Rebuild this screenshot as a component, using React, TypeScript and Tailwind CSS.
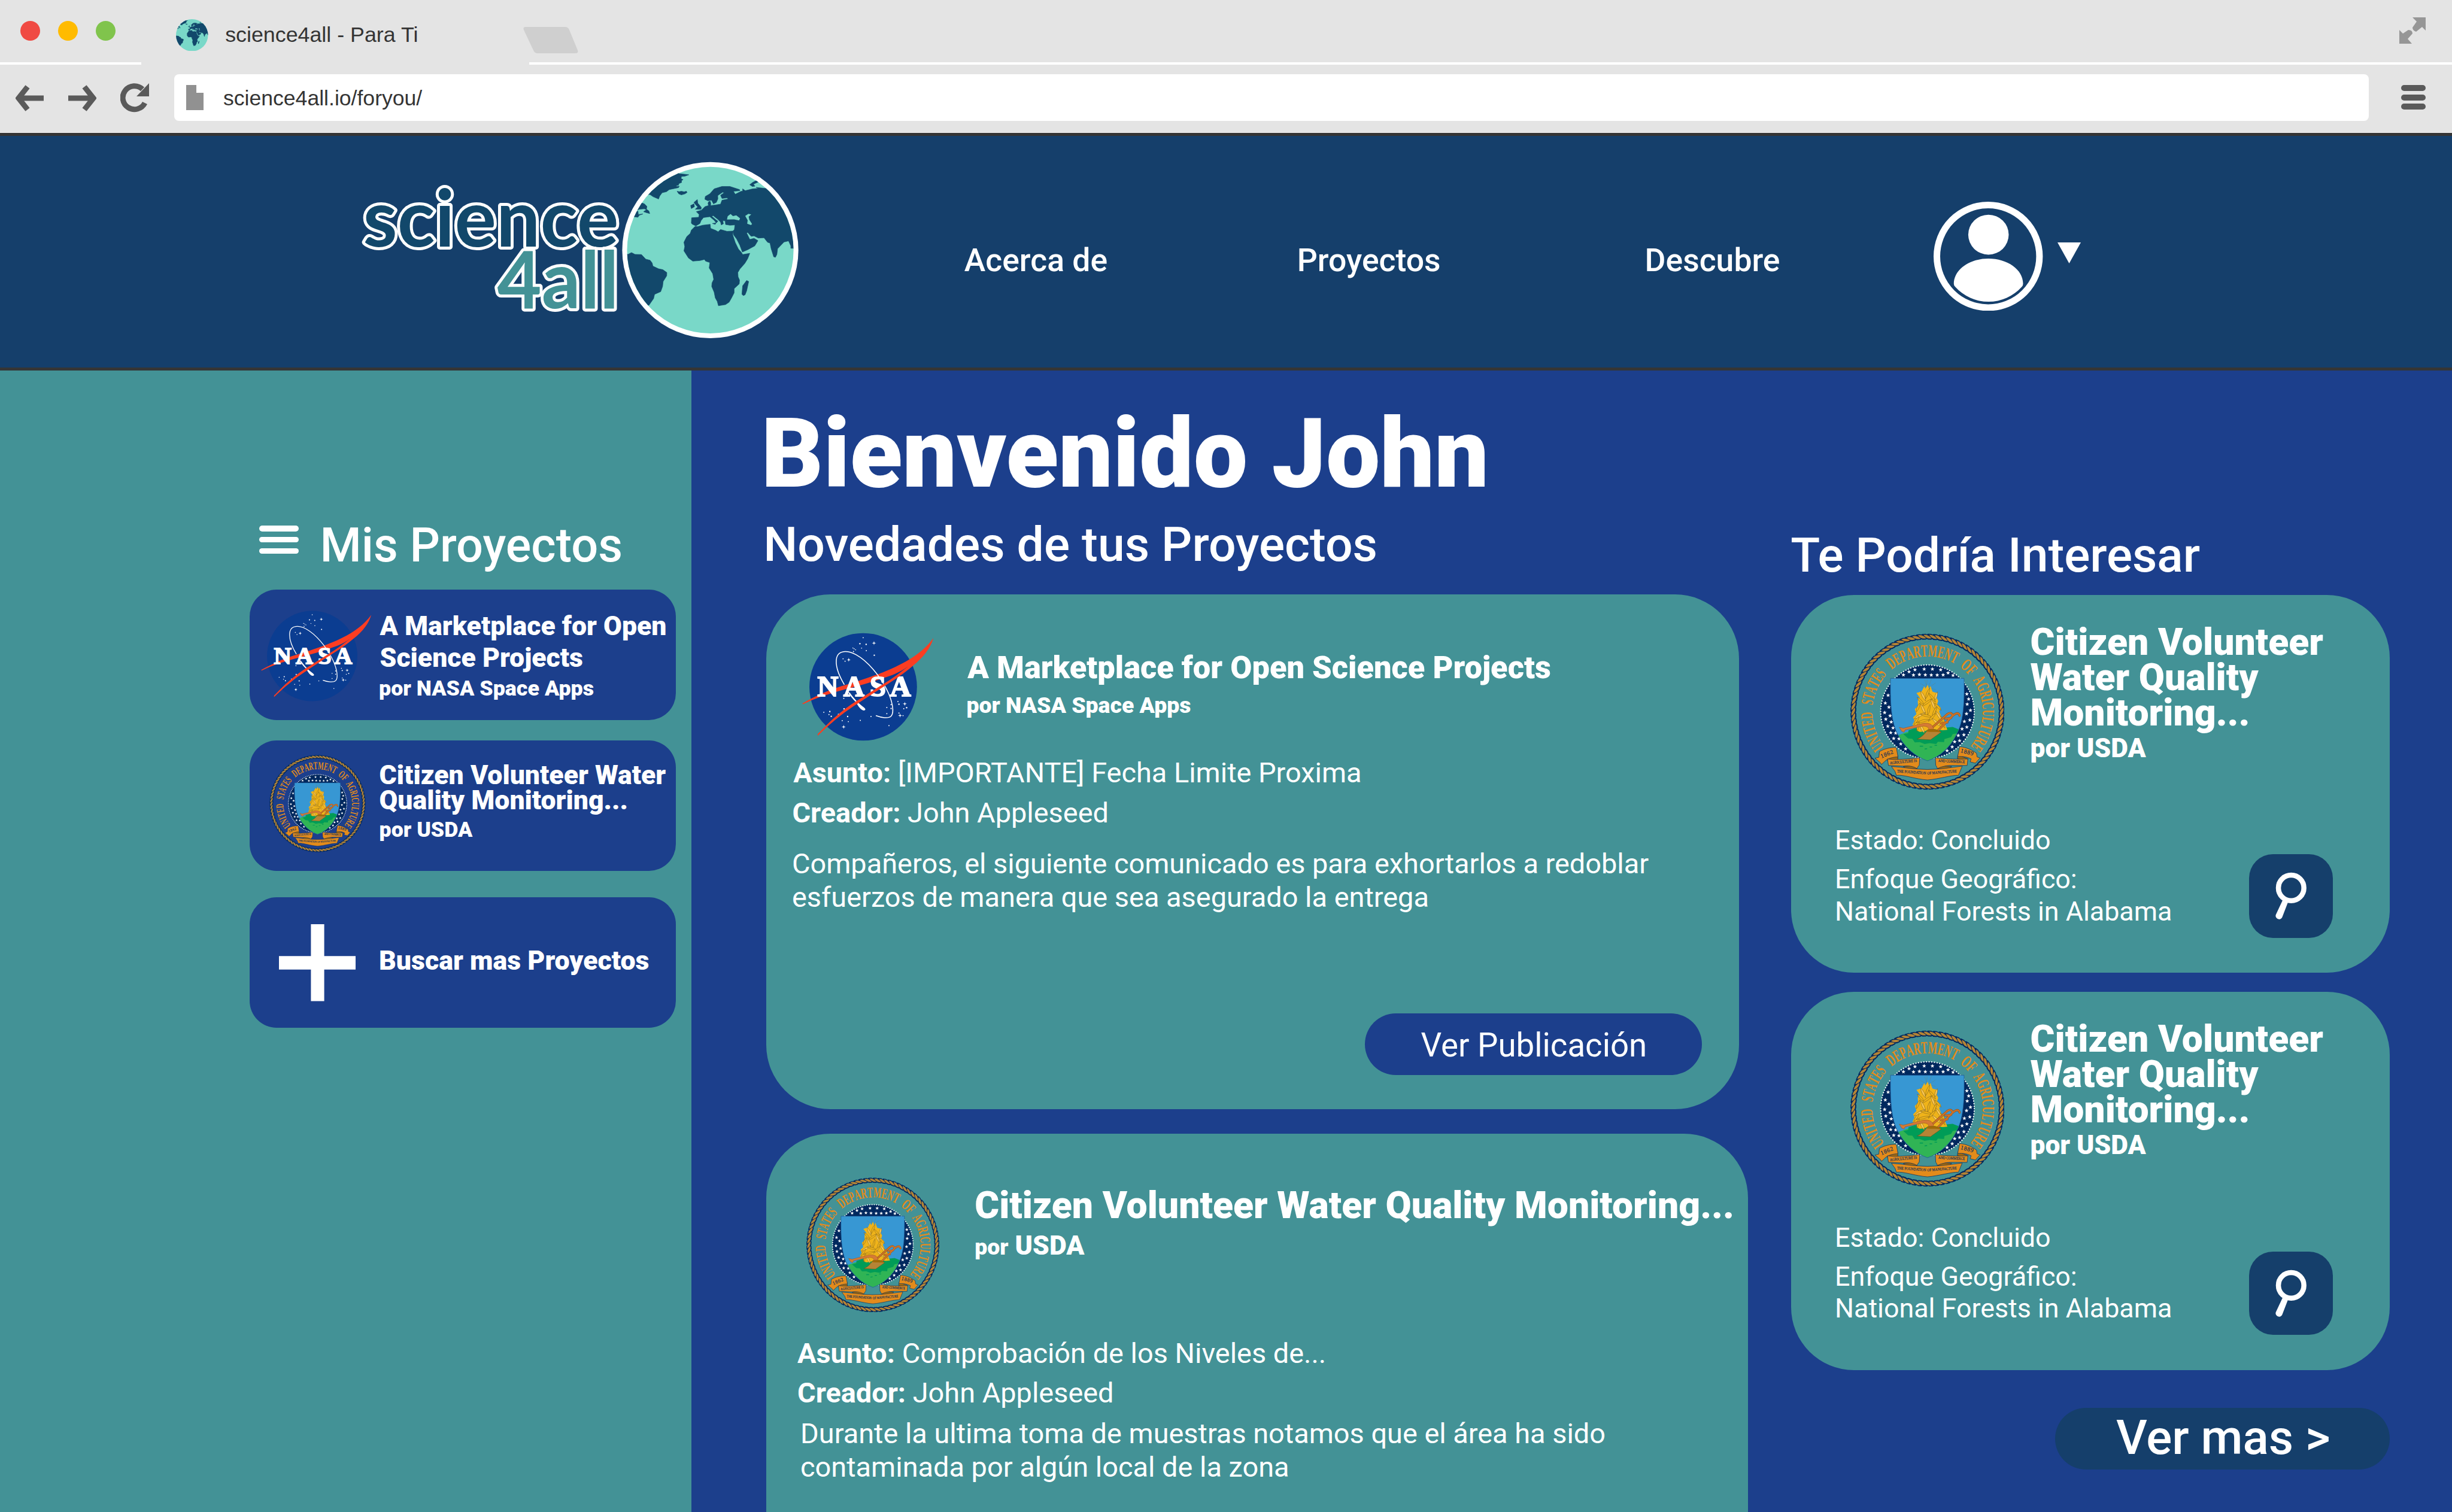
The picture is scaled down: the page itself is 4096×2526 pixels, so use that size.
import React from "react";

const NAVY = "#12486b";
const MINT = "#79d8c8";

const LAND = [
  "M240 285L262 300L300 316L308 295L325 272L355 265L375 250L440 236L445 226L425 229L425 222L440 219L442 208L462 200L460 188L472 180L458 174L460 158L485 156L512 146L480 142L440 138L430 100L150 100L150 285Z",
  "M430 262L445 265L460 262L480 266L495 262L500 270L485 280L460 287L442 280Z",
  "M130 400L165 388L200 385L215 392L195 405L215 412L238 418L232 400L215 388L218 368L200 350L185 345L130 340Z",
  "M130 415L155 400L158 425L190 421L165 430L155 444L125 440Z",
  "M60 700L85 705L110 692L135 705L180 706L210 738L240 746L255 765L260 787L300 806L330 812L358 832L357 855L332 895L328 930L315 966L272 985L265 1015L232 1062L60 1062Z",
  "M555 510L575 510L610 500L662 494L665 522L700 536L718 546L735 530L780 543L822 541L820 567L838 622L860 667L882 692L890 706L940 697L925 735L905 768L870 808L856 832L858 862L868 885L866 912L830 945L830 975L812 1010L795 1040L770 1057L720 1065L712 1035L698 1010L690 970L673 930L675 905L687 880L680 840L655 800L660 762L630 752L622 740L590 748L540 752L510 730L478 680L484 650L478 620L498 580L522 558L530 535Z",
  "M822 541L832 530L836 498L800 500L770 495L768 470L750 468L755 490L740 498L735 478L715 458L682 432L674 438L700 460L716 472L705 484L690 465L660 440L615 446L598 468L590 488L562 505L535 492L530 485L532 448L582 444L585 425L565 405L600 395L625 370L650 362L647 345L652 335L662 332L666 345L665 362L700 358L735 352L745 325L788 316L782 308L745 312L735 290L760 272L750 268L715 292L716 315L705 340L685 350L672 325L645 328L625 318L628 298L660 280L690 245L745 228L800 228L868 250L870 258L825 262L838 283L880 262L890 262L890 245L908 258L960 245L1000 242L985 235L1050 242L1300 242L1300 662L1228 662L1228 645L1212 610L1180 618L1135 665L1130 705L1120 725L1108 722L1090 665L1082 625L1065 620L1040 588L1000 590L970 575L950 578L925 550L918 555L940 600L970 592L997 608L975 645L925 672L888 688L870 640L848 597L826 567Z",
  "M678 488L702 484L698 494Z",
  "M548 340L572 320L575 345L600 375L598 388L558 388L575 372L562 358Z",
  "M525 362L548 350L552 370L530 383Z",
  "M940 216L960 200L985 187L1005 194L965 212L976 226L958 228Z",
  "M918 888L932 895L918 960L907 988L895 994L885 985L890 925Z",
];

function GlobeArt({ id }: { id: string }) {
  return (
    <>
      <clipPath id={id}>
        <circle cx="663" cy="675" r="584" />
      </clipPath>
      <circle cx="663" cy="675" r="584" fill={MINT} />
      <g clipPath={`url(#${id})`}>
        {LAND.map((d) => (
          <path key={d} d={d} fill={NAVY} stroke={NAVY} strokeWidth="3" strokeLinejoin="round" />
        ))}
        <path d="M780 460L785 437L805 421L822 436L845 431L872 452L865 466L830 459Z" fill={MINT} />
        <path d="M908 435L930 420L950 424L932 440L937 462L956 492L948 499L922 490L925 465Z" fill={MINT} />
      </g>
    </>
  );
}

function Logo() {
  return (
    <svg viewBox="600 260 740 320" className="h-[320px] w-[740px] shrink-0" role="img" aria-label="science4all">
      <g fontFamily="Lato" fontWeight="700" stroke="#ffffff" strokeWidth="10" strokeLinejoin="round" paintOrder="stroke">
        <text x="606.5" y="412" fontSize="132" textLength="427" lengthAdjust="spacingAndGlyphs" fill={NAVY}>
          science
        </text>
        <text x="830.5" y="514.5" fontSize="132" textLength="203" lengthAdjust="spacingAndGlyphs" fill="#439296">
          4all
        </text>
      </g>
      <g transform="translate(1039.4 271) scale(.2381) translate(-45 -58)">
        <circle cx="663" cy="675" r="618" fill="#ffffff" />
        <GlobeArt id="logo-globe" />
      </g>
    </svg>
  );
}

const DOTS = [
  [594, 155, 4], [571, 197, 5], [615, 202, 5], [583, 228, 3.5], [522, 227, 3.5], [531, 233, 3.5], [541, 240, 3.5], [526, 252, 4],
  [616, 246, 4], [672, 278, 5], [453, 303, 4], [467, 320, 4], [458, 581, 4], [460, 654, 5], [318, 678, 4], [360, 673, 5],
  [354, 694, 4], [370, 707, 5], [420, 692, 4], [485, 708, 5], [447, 737, 4], [490, 744, 4], [574, 735, 4], [649, 708, 4],
  [775, 772, 4], [760, 645, 4], [790, 625, 4.5], [790, 652, 4.5], [760, 688, 4], [838, 603, 4], [845, 622, 5], [899, 646, 5],
  [879, 653, 4], [845, 684, 4], [874, 702, 4],
];
const SPARKS = [[670, 193], [493, 310], [886, 619], [853, 701], [457, 781]];

function NasaLogo({ className }: { className: string }) {
  return (
    <svg viewBox="166 120 922 760" className={className} role="img" aria-label="NASA">
      <circle cx="594" cy="500" r="377.5" fill="#0b3d91" />
      {DOTS.map(([x, y, r], i) => (
        <circle key={i} cx={x} cy={y} r={r} fill="#fff" />
      ))}
      {SPARKS.map(([x, y], i) => (
        <path key={i} transform={`translate(${x} ${y})`} d="M0-15L2.5-4L5-5L4-2.5L15 0L4 2.5L5 5L2.5 4L0 15L-2.5 4L-5 5L-4 2.5L-15 0L-4-2.5L-5-5L-2.5-4Z" fill="#fff" />
      ))}
      <path
        d="M167 617C260 565 350 522 460 490C620 440 730 405 840 350C950 297 1030 235 1087 157C1068 225 1020 290 942 353L904 360C850 398 790 422 735 438C640 474 530 500 420 530C330 556 250 582 172 622Z"
        fill="#fc3d21"
      />
      <path
        d="M462 485C420 415 396 350 408 295C420 245 480 240 545 275C630 322 710 425 755 510C800 595 815 680 790 706C770 724 720 716 683 702"
        fill="none"
        stroke="#fff"
        strokeWidth="6.5"
      />
      <path d="M488 538L500 540C530 583 560 616 600 645C613 655 612 665 598 666C578 662 560 638 546 610C520 585 500 560 488 538Z" fill="#fff" />
      <g fontFamily="Liberation Serif" fontWeight="700" fontSize="203" fill="#fff" stroke="#fff" strokeWidth="9">
        <text x="273 456 641 782" y="566">
          NASA
        </text>
      </g>
      <path
        d="M942 353C880 408 810 452 740 497C680 535 620 575 555 618C470 672 430 705 350 773C325 796 300 820 275 843L275 831C300 805 330 775 345 760C400 708 460 655 540 604C600 565 670 522 735 480C795 445 850 402 904 360L930 335Z"
        fill="#fc3d21"
      />
    </svg>
  );
}

/* Lettering of the seal's ring: word, start and end angle in degrees clockwise from the top. */
const RING: [string, number, number][] = [
  ["UNITED", -129, -90],
  ["STATES", -83.5, -47.5],
  ["DEPARTMENT", -40.5, 30],
  ["OF", 35.5, 50],
  ["AGRICULTURE", 55, 129],
];
const ADV: Record<string, number> = {
  U: 722, N: 722, I: 389, T: 667, E: 667, D: 722, S: 556, A: 722, P: 611, R: 722, M: 944, O: 778, F: 611, G: 778, C: 722, L: 667,
};

const SEAL_STARS = [
  [471, 321], [527, 317], [577, 317], [627, 321], [435, 333], [672, 340], [401, 352], [462, 353], [498, 350], [534, 352], [570, 353],
  [606, 353], [642, 352], [702, 355], [308, 476], [291, 523], [313, 548], [287, 581], [320, 600], [294, 621], [327, 638], [306, 664],
  [338, 674], [324, 703], [354, 705], [342, 738], [374, 740], [385, 771], [414, 801], [786, 468], [797, 499], [788, 530], [808, 567],
  [784, 588], [804, 626], [771, 635], [786, 669], [757, 680], [768, 716], [734, 720], [742, 751], [712, 758], [697, 789], [666, 812],
];

const STAR = "M0-13L3.2-4.2L12.4-4L5.1 1.7L7.6 10.5L0 5.4L-7.6 10.5L-5.1 1.7L-12.4-4L-3.2-4.2Z";
const SHIELD = "M323 373H769C772 530 765 640 722 716C685 790 625 848 547 874C470 848 405 785 368 716C326 640 320 520 323 373Z";
const HANDLES = "M575 672L668 590Q690 574 700 598M610 690L700 600Q735 570 742 600M630 646L668 640M655 618L690 614";

/* Corn leaves: centre x, centre y, half length, rotation. */
const LEAVES: [number, number, number, number][] = [
  [520, 480, 34, 70], [548, 465, 36, -62], [575, 490, 34, 60], [600, 480, 26, -65], [505, 510, 30, 55], [545, 520, 40, -30],
  [580, 530, 34, 75], [610, 545, 30, 55], [490, 550, 30, -60], [520, 560, 36, 72], [555, 565, 34, -70], [590, 575, 34, -58],
  [500, 600, 40, -24], [540, 600, 38, 20], [575, 610, 34, -40], [615, 600, 34, 64], [480, 630, 30, -50], [520, 632, 44, -8],
  [600, 640, 36, 50], [635, 650, 32, 60], [490, 665, 30, -70], [515, 680, 30, 70], [640, 625, 26, 70],
];

function UsdaSeal({ id, className }: { id: string; className: string }) {
  const strands = Array.from({ length: 84 }, (_, i) => (i * 360) / 84);
  return (
    <svg viewBox="79 100 936 951" className={className} role="img" aria-label="United States Department of Agriculture">
      <g transform="translate(547 575.5) scale(1 1.012) translate(-547 -575.5)">
        <circle cx="547" cy="575.5" r="450" fill="none" stroke="#00285e" strokeWidth="30" />
        <circle cx="547" cy="575.5" r="450" fill="none" stroke="#00285e" strokeWidth="35" strokeDasharray="24 9.66" />
        {strands.map((a) => (
          <g key={a} transform={`rotate(${a} 547 575.5)`}>
            <path d="M523 115C538 111 556 118 572 135C556 140 536 133 523 115Z" fill="#b58435" />
          </g>
        ))}
      </g>
      <g fontFamily="Liberation Serif" fontWeight="700" fontSize="105" fill="#e38b1b">
        {RING.map(([word, from, to]) => {
          const total = [...word].reduce((s, c) => s + ADV[c], 0);
          const k = ((to - from) * Math.PI * 338) / 180 / (total * 0.105);
          let run = 0;
          return [...word].map((c, i) => {
            const mid = from + ((run + ADV[c] / 2) / total) * (to - from);
            run += ADV[c];
            return (
              <text key={word + i} textAnchor="middle" transform={`translate(547 575.5) rotate(${mid}) translate(0 -335) scale(${k} 1)`}>
                {c}
              </text>
            );
          });
        })}
      </g>
      <circle cx="547" cy="575.5" r="284" fill="#00285e" />
      <circle cx="547" cy="575.5" r="284" fill="none" stroke="#fff" strokeWidth="8" strokeLinecap="round" strokeDasharray="0.1 16.12" />
      {SEAL_STARS.map(([x, y], i) => (
        <path key={i} d={STAR} transform={`translate(${x} ${y})`} fill="#fff" />
      ))}
      <clipPath id={id}>
        <path d={SHIELD} />
      </clipPath>
      <g clipPath={`url(#${id})`}>
        <rect x="310" y="360" width="480" height="530" fill="#3797d3" />
        <path d="M340 728C390 715 410 695 470 690L700 690L790 670V900H340Z" fill="#30b455" />
        <path d="M400 712L430 705L432 688L470 676L660 672L700 668L735 682L730 706L700 712L690 730L650 742L648 760L610 758L600 772L560 766L530 772L500 760L470 762L455 740L430 738Z" fill="#009c57" />
        <path d="M545 800L530 802M590 780H605M520 785H500M560 790H575" stroke="#009c57" strokeWidth="6" />
        <path
          d="M545 430L530 380M550 430L572 378M548 430L505 405M552 430L598 400M548 430L510 430M560 430L596 442M540 430L545 380"
          stroke="#7d7a40"
          strokeWidth="3"
          strokeDasharray="3 6"
          fill="none"
        />
        <path
          d="M549 412L556 436L566 420L572 440L578 455L606 462L600 486L612 510L606 530L628 552L618 575L632 610L648 640L668 685L640 688L560 680L530 695L500 698L484 690L488 672L456 655L468 630L460 610L480 590L470 560L490 540L488 510L500 490L480 462L512 452L528 420L534 436Z"
          fill="#efb31a"
        />
        {LEAVES.map(([x, y, l, r], i) => (
          <path
            key={i}
            transform={`translate(${x} ${y}) rotate(${r})`}
            d={`M${-l} 4Q0 -14 ${l} -4Q0 12 ${-l} 4Z`}
            fill={i % 3 === 0 ? "#fcc854" : "#efb31a"}
            stroke="#7d6320"
            strokeWidth="2"
          />
        ))}
        <g fill="none" strokeLinecap="round">
          <path d={HANDLES} stroke="#8c5322" strokeWidth="13" />
          <path d={HANDLES} stroke="#cf7226" strokeWidth="9" />
        </g>
        <path d="M376 670L400 676L520 646C560 640 585 655 584 690L556 690C556 668 540 662 515 664L412 686L404 700L390 694Z" fill="#d57a35" stroke="#8c5322" strokeWidth="2" />
        <path d="M484 742C520 725 530 708 548 685C580 678 610 684 630 700C605 718 580 735 566 746Z" fill="#b58435" stroke="#6b4c14" strokeWidth="2" />
        <path d="M548 685C580 678 610 684 630 700C600 698 575 700 540 696Z" fill="#a06a08" />
      </g>
      <path d={SHIELD} fill="none" stroke="#1f5c9a" strokeWidth="3" />
      <g stroke="#00285e" strokeWidth="2.5" strokeLinejoin="round">
        <path d="M300 862L366 838L368 866L310 880Z" fill="#a3690c" />
        <path d="M794 862L732 838L728 860L780 880Z" fill="#a3690c" />
        <path d="M255 818C285 800 320 792 358 793L368 850C340 850 305 858 285 880L268 896L260 884L228 858L252 852Z" fill="#e38b1b" />
        <path d="M730 848L742 788C780 790 815 806 845 828L848 850L866 856L838 888L806 880L812 862C790 850 760 846 730 848Z" fill="#e38b1b" />
        <path d="M400 908L490 900L480 924L420 924Z" fill="#a3690c" />
        <path d="M694 908L604 900L614 924L674 924Z" fill="#a3690c" />
        <path d="M304 862C360 870 430 862 500 855L497 900C490 908 486 915 484 921C460 906 430 902 400 906L310 902Z" fill="#e38b1b" />
        <path d="M595 855C660 862 740 866 792 862L788 902L690 902C650 904 630 910 606 921C606 912 600 906 597 900Z" fill="#e38b1b" />
        <path d="M328 908C400 912 470 926 547 926C620 926 690 914 758 906L735 962C690 960 620 984 547 990C470 984 400 956 358 962L350 938Z" fill="#e38b1b" />
      </g>
      <g fontFamily="Liberation Serif" fill="#00285e" stroke="#00285e" strokeWidth=".6">
        <text transform="translate(268 858) rotate(-22)" fontSize="36" textLength="80">1862</text>
        <text transform="translate(746 822) rotate(14)" fontSize="36" textLength="80">1889</text>
        <text transform="translate(320 894) rotate(-5)" fontSize="24" textLength="164" lengthAdjust="spacingAndGlyphs">AGRICULTURE IS</text>
        <text transform="translate(612 880) rotate(3)" fontSize="24" textLength="162" lengthAdjust="spacingAndGlyphs">AND COMMERCE</text>
        <text transform="translate(362 944) rotate(4)" fontSize="24" textLength="176" lengthAdjust="spacingAndGlyphs">THE FOUNDATION</text>
        <text transform="translate(546 957) rotate(-4)" fontSize="24" textLength="180" lengthAdjust="spacingAndGlyphs">OF MANUFACTURE</text>
      </g>
    </svg>
  );
}

function BrowserChrome() {
  return (
    <div className="h-[226.5px] shrink-0 border-b-[5px] border-[#353535] bg-[#e4e4e4] font-['Liberation_Sans'] text-[#343434]">
      <div className="flex h-[104px] items-start">
        <div className="mt-[34.5px] ml-[34px] flex gap-[30.2px]">
          <span className="size-[33px] rounded-full bg-[#f04a43]" />
          <span className="size-[33px] rounded-full bg-[#ffbb00]" />
          <span className="size-[33px] rounded-full bg-[#80c44c]" />
        </div>
        <svg viewBox="79 91 1168 1168" className="mt-[31.5px] ml-[100.8px] size-[53.5px]">
          <GlobeArt id="tab-globe" />
        </svg>
        <span className="mt-[40.5px] ml-[28.5px] w-[497.2px] text-[35.8px] leading-none whitespace-nowrap">science4all - Para Ti</span>
        <svg viewBox="0 0 94 46" className="mt-[44px] h-[46px] w-[94px]">
          <path d="M5 1H71Q76 1 78 6L92 40Q94 45 88 45H25Q20 45 18 40L2 6Q0 1 5 1Z" fill="#cfcfcf" />
        </svg>
        <svg viewBox="0 0 44 46" className="mt-[28px] mr-[44px] ml-auto h-[46px] w-[44px]">
          <path d="M22 1H44V23L38 17L28 25Q22 23 22 18L29 8ZM0 22L6 28L15 22Q22 22 22 28L14 37L21 45H0Z" fill="#969696" />
        </svg>
      </div>
      <div className="flex h-[3.5px] justify-between">
        <span className="w-[236px] bg-white" />
        <span className="w-[3212px] bg-white" />
      </div>
      <div className="flex h-[114px] items-start border-b border-[#f4f4f4]">
        <svg viewBox="0 0 48 44" className="mt-[34px] ml-[26px] h-[44px] w-[48px]">
          <path d="M20 3L5 22L20 41M6 22H47" fill="none" stroke="#5a5a5a" strokeWidth="9" />
        </svg>
        <svg viewBox="0 0 48 44" className="mt-[34px] ml-[39px] h-[44px] w-[48px]">
          <path d="M28 3L43 22L28 41M42 22H1" fill="none" stroke="#5a5a5a" strokeWidth="9" />
        </svg>
        <svg viewBox="0 0 50 50" className="mt-[30.5px] ml-[40px] h-[50px] w-[50px]">
          <path d="M41 34A19.5 19.5 0 1 1 37 11" fill="none" stroke="#5a5a5a" strokeWidth="9" />
          <path d="M48 1V23H27Z" fill="#5a5a5a" />
        </svg>
        <div className="mt-[16px] ml-[39.7px] flex h-[78px] w-[3666px] items-start rounded-[8px] bg-white">
          <svg viewBox="0 0 29 42" className="mt-[18.5px] ml-[20.3px] h-[42px] w-[29px]">
            <path d="M0 0H17V13H29V42H0Z" fill="#919191" />
          </svg>
          <span className="mt-[23px] ml-[33px] text-[35.6px] leading-none whitespace-nowrap">science4all.io/foryou/</span>
        </div>
        <div className="mt-[34.5px] ml-[54px] flex w-[41px] flex-col gap-[5.5px]">
          <span className="h-[10px] rounded-[5px] bg-[#5a5a5a]" />
          <span className="h-[10px] rounded-[5px] bg-[#5a5a5a]" />
          <span className="h-[10px] rounded-[5px] bg-[#5a5a5a]" />
        </div>
      </div>
    </div>
  );
}

function NavBar() {
  return (
    <header className="flex h-[392.5px] shrink-0 items-start border-b-[5px] border-[#353535] bg-[#153f6b] pl-[600px]">
      <div className="mt-[33.5px]">
        <Logo />
      </div>
      <nav className="mt-[181.4px] ml-[270.8px] flex text-[53.5px] leading-none font-medium text-white">
        <a className="w-[555.9px]">Acerca de</a>
        <a className="w-[580.9px]">Proyectos</a>
        <a className="w-[482.8px]">Descubre</a>
      </nav>
      <svg viewBox="0 0 182.4 182.4" className="mt-[110px] size-[182.4px]">
        <circle cx="91.2" cy="91.2" r="85.7" fill="none" stroke="#fff" strokeWidth="11" />
        <ellipse cx="91.7" cy="55.1" rx="33.8" ry="33.3" fill="#fff" />
        <path d="M33.8 137C34 113 60 95 91.5 95S149.500 113 149.500 137Q149.500 140 147.500 142A74.500 74.500 0 0 1 36 142Q33.800 140 33.800 137Z" fill="#fff" />
      </svg>
      <svg viewBox="0 0 39 35" className="mt-[178px] ml-[23.8px] h-[35px] w-[39px]">
        <path d="M0 0H39L19.5 35Z" fill="#fff" />
      </svg>
    </header>
  );
}

function SideCard({ children, className = "" }: { children: React.ReactNode; className?: string }) {
  return <div className={`flex h-[218px] w-[712.6px] items-start rounded-[45px] bg-[#1c3f8c] whitespace-nowrap ${className}`}>{children}</div>;
}

function Sidebar() {
  return (
    <aside className="w-[1154.7px] shrink-0 bg-[#439296] pt-[251.8px] pl-[416.6px] text-white">
      <div className="flex items-start pl-[16.5px]">
        <div className="mt-[7.7px] flex w-[65.7px] flex-col gap-[9.4px]">
          <span className="h-[9.3px] rounded-full bg-white" />
          <span className="h-[9.3px] rounded-full bg-white" />
          <span className="h-[9.3px] rounded-full bg-white" />
        </div>
        <h2 className="mt-px ml-[35.6px] text-[79.3px] leading-[78.3px] font-medium whitespace-nowrap">Mis Proyectos</h2>
      </div>
      <SideCard className="mt-[35.2px]">
        <NasaLogo className="mt-[35px] ml-[19px] h-[151.9px] w-[184.3px] shrink-0" />
        <div className="mt-[35.2px] ml-[14.6px] font-black">
          <p className="text-[44.6px] leading-[52.9px]">
            A Marketplace for Open
            <br />
            Science Projects
          </p>
          <p className="mt-[6.8px] -ml-[1.5px] text-[35.8px] leading-none">por NASA Space Apps</p>
        </div>
      </SideCard>
      <SideCard className="mt-[33.3px]">
        <UsdaSeal id="shield-side" className="mt-[24.7px] ml-[33.4px] h-[163px] w-[161px] shrink-0" />
        <div className="mt-[38.4px] ml-[22.6px] font-black">
          <p className="text-[44.6px] leading-[41.9px]">
            Citizen Volunteer Water
            <br />
            Quality Monitoring...
          </p>
          <p className="mt-[10.1px] text-[35.7px] leading-none">por USDA</p>
        </div>
      </SideCard>
      <SideCard className="mt-[44.8px]">
        <svg viewBox="0 0 128.8 128.6" className="mt-[44.8px] ml-[49.1px] h-[128.6px] w-[128.8px] shrink-0">
          <path d="M53.4 0H75.6V53.3H128.8V75.8H75.6V128.6H53.4V75.8H0V53.3H53.4Z" fill="#fff" />
        </svg>
        <p className="mt-[83.9px] ml-[38.5px] text-[44.7px] leading-none font-black">Buscar mas Proyectos</p>
      </SideCard>
    </aside>
  );
}

function Feed() {
  return (
    <main className="w-[1639.6px] shrink-0 whitespace-nowrap text-white">
      <h1 className="mt-[59.1px] -ml-[8.5px] text-[161px] leading-[161.2px] font-black">Bienvenido John</h1>
      <h2 className="mt-[31.2px] -ml-[4.8px] text-[80.5px] leading-[80px] font-medium">Novedades de tus Proyectos</h2>

      <article className="mt-[42.9px] h-[860px] w-[1624.7px] rounded-[107px] bg-[#439296] pt-[63.7px] text-[46.9px] leading-none">
        <div className="flex items-start pl-[59.6px]">
          <NasaLogo className="h-[181px] w-[219.5px] shrink-0" />
          <div className="mt-[31.8px] ml-[57.2px] font-black">
            <h3 className="text-[52.4px] leading-none">A Marketplace for Open Science Projects</h3>
            <p className="mt-[18.6px] -ml-[1.9px] text-[37.4px] leading-none">por NASA Space Apps</p>
          </div>
        </div>
        <p className="mt-[30.4px] ml-[45.2px]">
          <b className="font-bold">Asunto:</b> [IMPORTANTE] Fecha Limite Proxima
        </p>
        <p className="mt-[19.7px] ml-[43.4px]">
          <b className="font-bold">Creador:</b> John Appleseed
        </p>
        <p className="mt-[33.3px] ml-[43px] leading-[55.7px]">
          Compañeros, el siguiente comunicado es para exhortarlos a redoblar
          <br />
          esfuerzos de manera que sea asegurado la entrega
        </p>
        <button className="mt-[166.6px] ml-[1000px] flex h-[102.4px] w-[563px] items-start rounded-full bg-[#1c3f8c] pt-[25.4px] pl-[93.5px] text-[54.6px] leading-none">
          Ver Publicación
        </button>
      </article>

      <article className="mt-[40.4px] h-[632.1px] rounded-t-[107px] bg-[#439296] pt-[73.5px] text-[46.9px] leading-none">
        <div className="flex items-start pl-[67.2px]">
          <UsdaSeal id="shield-feed" className="h-[225.7px] w-[222.2px] shrink-0" />
          <div className="mt-[16px] ml-[58.8px] font-black">
            <h3 className="text-[62.5px] leading-none">Citizen Volunteer Water Quality Monitoring...</h3>
            <p className="mt-[13.7px] text-[44.4px] leading-none">
              <span className="text-[37.5px]">por</span> USDA
            </p>
          </div>
        </div>
        <p className="mt-[44.8px] ml-[52px]">
          <b className="font-bold">Asunto:</b> Comprobación de los Niveles de...
        </p>
        <p className="mt-[19.6px] ml-[52px]">
          <b className="font-bold">Creador:</b> John Appleseed
        </p>
        <p className="mt-[15.5px] ml-[57.1px] leading-[56.1px]">
          Durante la ultima toma de muestras notamos que el área ha sido
          <br />
          contaminada por algún local de la zona
        </p>
      </article>
    </main>
  );
}

function SuggestionCard({ id, className }: { id: string; className: string }) {
  return (
    <article className={`h-[631.7px] w-[999.8px] rounded-[105px] bg-[#439296] ${className}`}>
      <div className="flex h-[326.2px] items-start pl-[98.4px]">
        <UsdaSeal id={id} className="mt-[64.2px] h-[262px] w-[257.6px] shrink-0" />
        <div className="mt-[50px] ml-[43px] font-black">
          <h3 className="text-[62.5px] leading-[58.9px]">
            Citizen Volunteer
            <br />
            Water Quality
            <br />
            Monitoring...
          </h3>
          <p className="mt-[7.4px] text-[44.3px] leading-none">por USDA</p>
        </div>
      </div>
      <div className="flex items-start justify-between pr-[95.7px] pl-[72.6px]">
        <div className="mt-[62.4px] text-[44.8px] leading-none">
          <p>Estado: Concluido</p>
          <p className="mt-[19.9px]">Enfoque Geográfico:</p>
          <p className="mt-[8.9px]">National Forests in Alabama</p>
        </div>
        <button className="mt-[107.2px] size-[139.5px] rounded-[40px] bg-[#153f6b]">
          <svg viewBox="0 0 139.5 139.5" className="size-full">
            <circle cx="70.3" cy="56.4" r="21.3" fill="none" stroke="#fff" strokeWidth="8.5" />
            <path d="M56.500 76L65.500 79L55.500 105A5.700 5.700 0 0 1 44.800 101Z" fill="#fff" />
          </svg>
        </button>
      </div>
    </article>
  );
}

function Suggestions() {
  return (
    <section className="ml-[72.9px] pt-[268.8px] whitespace-nowrap text-white">
      <h2 className="-ml-[1.300px] text-[80.4px] leading-[79px] font-medium">Te Podría Interesar</h2>
      <SuggestionCard id="shield-a" className="mt-[27px]" />
      <SuggestionCard id="shield-b" className="mt-[31.8px]" />
      <button className="mt-[63.2px] ml-[440.6px] flex h-[103.3px] w-[559.2px] items-start rounded-full bg-[#153f6b] pt-[9.6px] pl-[102px] text-[80.3px] leading-none font-medium">
        Ver mas &gt;
      </button>
    </section>
  );
}

export default function App() {
  return (
    <div className="flex h-[2526px] w-[4096px] flex-col overflow-hidden bg-[#1c3f8c] font-[Roboto,sans-serif]">
      <BrowserChrome />
      <NavBar />
      <div className="flex min-h-0 flex-1">
        <Sidebar />
        <div className="flex pl-[125.3px]">
          <Feed />
          <Suggestions />
        </div>
      </div>
    </div>
  );
}
